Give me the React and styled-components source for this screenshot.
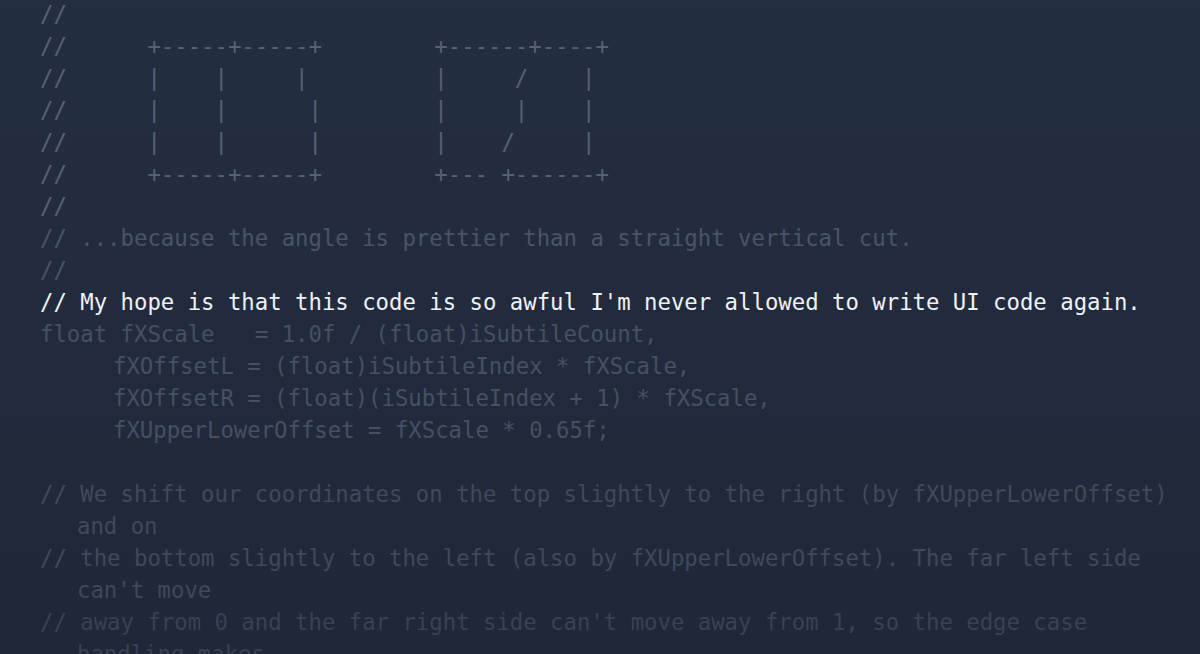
import React from "react";
import styled, { createGlobalStyle } from "styled-components";

const Global = createGlobalStyle`
  html, body {
    margin: 0;
    padding: 0;
    width: 1200px;
    height: 654px;
    overflow: hidden;
    background: #222b3d;
  }
`;

const Page = styled.main`
  width: 1200px;
  height: 654px;
  overflow: hidden;
  background: linear-gradient(180deg, #242e41 0%, #222b3d 50%, #1f2738 100%);
`;

const Code = styled.pre`
  margin: -2px 0 0 0;
  padding: 0 0 0 40px;
  font-family: "DejaVu Sans Mono", "Liberation Mono", monospace;
  font-size: 22.3px;
  line-height: 32px;
  display: flex;
  flex-direction: column;
`;

const tones = {
  art: "#576175",
  comment: "#4a5467",
  code: "#465063",
  low: "#40495b",
  lower: "#394254",
  bright: "#eef1f5",
};

const Line = styled.span`
  display: block;
  height: 32px;
  white-space: pre;
  color: ${(p) => tones[p.$tone] || tones.comment};
  padding-left: ${(p) => p.$indent || 0}px;
`;

const RightBox = styled.span`
  margin-left: 5px;
`;

const art = [
  ["//", ""],
  ["//      +-----+-----+        ", "+------+----+"],
  ["//      |    |     |         ", "|     /    |"],
  ["//      |    |      |        ", "|     |    |"],
  ["//      |    |      |        ", "|    /     |"],
  ["//      +-----+-----+        ", "+--- +------+"],
  ["//", ""],
];

const lines = [
  { t: "// ...because the angle is prettier than a straight vertical cut.", tone: "comment" },
  { t: "//", tone: "comment" },
  { t: "// My hope is that this code is so awful I'm never allowed to write UI code again.", tone: "bright" },
  { t: "float fXScale   = 1.0f / (float)iSubtileCount,", tone: "code" },
  { t: "fXOffsetL = (float)iSubtileIndex * fXScale,", tone: "code", indent: 73 },
  { t: "fXOffsetR = (float)(iSubtileIndex + 1) * fXScale,", tone: "code", indent: 73 },
  { t: "fXUpperLowerOffset = fXScale * 0.65f;", tone: "code", indent: 73 },
  { t: "", tone: "code" },
  { t: "// We shift our coordinates on the top slightly to the right (by fXUpperLowerOffset)", tone: "low" },
  { t: "and on", tone: "low", indent: 37 },
  { t: "// the bottom slightly to the left (also by fXUpperLowerOffset). The far left side", tone: "low" },
  { t: "can't move", tone: "low", indent: 37 },
  { t: "// away from 0 and the far right side can't move away from 1, so the edge case", tone: "lower" },
  { t: "handling makes", tone: "lower", indent: 37 },
];

export default function App() {
  return (
    <Page>
      <Global />
      <Code>
        {art.map(([left, right], i) => (
          <Line key={"a" + i} $tone="art">
            {left}
            {right && <RightBox>{right}</RightBox>}
          </Line>
        ))}
        {lines.map((l, i) => (
          <Line key={i} $tone={l.tone} $indent={l.indent}>
            {l.t || "\u00a0"}
          </Line>
        ))}
      </Code>
    </Page>
  );
}
